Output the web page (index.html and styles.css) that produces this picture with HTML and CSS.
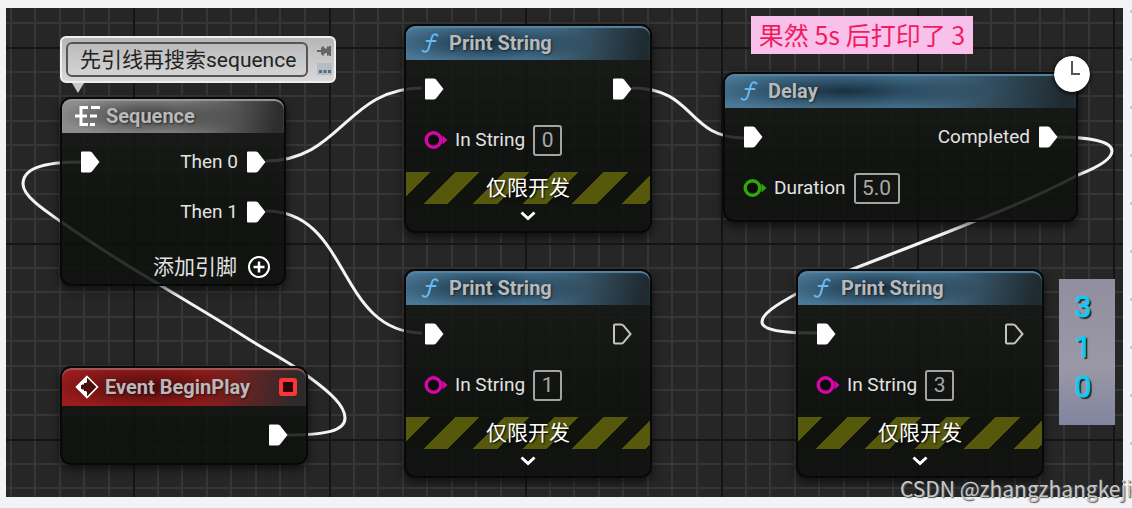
FILE: index.html
```html
<!DOCTYPE html>
<html lang="zh-CN">
<head>
<meta charset="utf-8">
<title>Blueprint – Sequence</title>
<link rel="stylesheet" href="styles.css">
</head>
<body>
<svg class="defs" aria-hidden="true">
  <symbol id="exec" viewBox="0 0 20 22"><path d="M2 0.500H9.500Q11 0.500 12 1.600L19.500 11L12 20.400Q11 21.500 9.500 21.500H2Q1 21.500 1 20.500V1.500Q1 0.500 2 0.500Z" fill="#fff"/></symbol>
  <symbol id="exec-open" viewBox="0 0 20 22"><path d="M3 1.500H9Q10.500 1.500 11.500 2.700L18.500 11L11.500 19.300Q10.500 20.500 9 20.500H3Q2 20.500 2 19.500V2.500Q2 1.500 3 1.500Z" fill="none" stroke="#c4c4c4" stroke-width="2"/></symbol>
  <symbol id="pin" viewBox="0 0 24 20"><circle cx="9.500" cy="10" r="7.300" fill="#0b0b0b" stroke="currentColor" stroke-width="3.400"/><path d="M18.500 5.500L23.500 10L18.500 14.500Z" fill="currentColor"/></symbol>
  <symbol id="fn" viewBox="0 0 18 22"><path d="M16.500 3.600C14.800 1.300 11.700 2 10.800 5.500L7.600 16.500C6.700 19.900 3.800 20.800 1.600 18.600M5.500 9H14.500" fill="none" stroke="#67b9ef" stroke-width="2" stroke-linecap="round"/></symbol>
  <symbol id="chevron" viewBox="0 0 16 10"><path d="M1.500 1.500L8 7.500L14.500 1.500" fill="none" stroke="#fff" stroke-width="3"/></symbol>
</svg>

<main class="graph">
  <svg class="layer" aria-hidden="true">
    <defs>
      <pattern id="grid" x="127" y="39" width="196" height="196" patternUnits="userSpaceOnUse">
        <path d="M25 0V196M49 0V196M74 0V196M98 0V196M123 0V196M147 0V196M172 0V196M0 25H196M0 49H196M0 74H196M0 98H196M0 123H196M0 147H196M0 172H196" stroke="#363636" stroke-width="2"/>
        <path d="M1 0V196M0 1H196" stroke="#151515" stroke-width="2"/>
      </pattern>
    </defs>
    <rect width="100%" height="100%" fill="url(#grid)"/>
    <g fill="none" stroke="#f4f4f4" stroke-width="3">
      <path d="M260 153C335 153 340 80 416 80"/>
      <path d="M260 203C345 203 330 324 416 325"/>
      <path d="M626 80C690 80 680 130 738 130"/>
      <path d="M76 154C35 154 17 161 17 176C17 188 38 202 54 213C84 234 120 257 154 277C185 296 215 313 244 332C272 349 288 357 303 369C325 385 339 398 339 410C339 423 320 427 280 427"/>
      <path d="M1050 129C1085 129 1106 134 1106 143C1106 152 1090 160 1072 167C1040 184 1003 200 969 213C930 229 888 245 847 261C825 270 805 278 790 286C770 297 756 306 756 314C756 322 775 325 811 325"/>
    </g>
  </svg>

  <aside class="bubble">
    <input class="bubble-text" aria-label="注释" value="先引线再搜索sequence">
    <span class="bubble-tools">
      <svg width="16" height="12" viewBox="0 0 16 12"><path d="M0 5H4V3L6 1L8 3.500H10V1L12 2V1H14V11H12V10L10 11V8H8L6 11L4 9V7H0Z" fill="#666"/></svg>
      <svg width="16" height="12" viewBox="0 0 16 12"><path d="M0 0H15V12H0Z" fill="#b4bdc6"/><path d="M2 7H5V10H2ZM6.500 7H9.500V10H6.500ZM11 7H14V10H11Z" fill="#596b7c"/></svg>
    </span>
  </aside>

  <section class="node sequence">
    <h2 class="title gray"><svg width="25" height="20" viewBox="0 0 25 20"><path d="M0 10H12M13 1.500H6V18.500H13M16 1.500H25M15 10H22M15 18.500H20" fill="none" stroke="#fff" stroke-width="3"/></svg>Sequence</h2>
    <div class="row"><svg class="exec"><use href="#exec"/></svg><span class="out">Then 0<svg class="exec"><use href="#exec"/></svg></span></div>
    <div class="row"><span class="out">Then 1<svg class="exec"><use href="#exec"/></svg></span></div>
    <button class="add">添加引脚<svg width="24" height="24" viewBox="0 0 24 24"><path d="M12 6.500V17.500M6.500 12H17.500" stroke="#fff" stroke-width="2.500"/><circle cx="12" cy="12" r="10" fill="none" stroke="#fff" stroke-width="2"/></svg></button>
  </section>

  <section class="node event">
    <h2 class="title red"><svg width="24" height="24" viewBox="0 0 24 24"><path d="M12 1.500L22.500 12L12 22.500L1.500 12Z" fill="#4c0d0d" stroke="#fff" stroke-width="1.600"/><path d="M12 1V8H9V10H6V14H9V16H12V23L1 12Z" fill="#fff"/><path d="M7 9.500H11V7L16 12L11 17V14.500H7Z" fill="#4c0d0d"/></svg>Event BeginPlay<span class="delegate"></span></h2>
    <div class="row"><span class="out"><svg class="exec"><use href="#exec"/></svg></span></div>
  </section>

  <section class="node print first">
    <h2 class="title blue"><svg class="fn"><use href="#fn"/></svg>Print String</h2>
    <div class="row"><svg class="exec"><use href="#exec"/></svg><svg class="exec out"><use href="#exec"/></svg></div>
    <label class="row field">
      <svg class="pin pink"><use href="#pin"/></svg>In String<input class="value" value="0"></label>
    <p class="dev">仅限开发</p>
    <button class="more" aria-label="展开"><svg class="chevron"><use href="#chevron"/></svg></button>
  </section>

  <section class="node print second">
    <h2 class="title blue"><svg class="fn"><use href="#fn"/></svg>Print String</h2>
    <div class="row"><svg class="exec"><use href="#exec"/></svg><svg class="exec out"><use href="#exec-open"/></svg></div>
    <label class="row field">
      <svg class="pin pink"><use href="#pin"/></svg>In String<input class="value" value="1"></label>
    <p class="dev">仅限开发</p>
    <button class="more" aria-label="展开"><svg class="chevron"><use href="#chevron"/></svg></button>
  </section>

  <section class="node delay">
    <h2 class="title blue"><svg class="fn"><use href="#fn"/></svg>Delay</h2>
    <div class="row"><svg class="exec"><use href="#exec"/></svg><span class="out">Completed<svg class="exec"><use href="#exec"/></svg></span></div>
    <label class="row field">
      <svg class="pin green"><use href="#pin"/></svg>Duration<input class="value wide" value="5.0"></label>
    <svg class="clock" viewBox="0 0 36 36"><circle cx="18" cy="18" r="18" fill="#fff"/><path d="M18 5V18H26" fill="none" stroke="#555" stroke-width="2"/></svg>
  </section>

  <section class="node print third">
    <h2 class="title blue"><svg class="fn"><use href="#fn"/></svg>Print String</h2>
    <div class="row"><svg class="exec"><use href="#exec"/></svg><svg class="exec out"><use href="#exec-open"/></svg></div>
    <label class="row field">
      <svg class="pin pink"><use href="#pin"/></svg>In String<input class="value" value="3"></label>
    <p class="dev">仅限开发</p>
    <button class="more" aria-label="展开"><svg class="chevron"><use href="#chevron"/></svg></button>
  </section>

  <p class="note">果然 5s 后打印了 3</p>
  <ol class="log"><li>3</li><li>1</li><li>0</li></ol>
</main>
<div class="ticks"></div>
<p class="watermark">CSDN @zhangzhangkeji</p>
</body>
</html>
```

FILE: styles.css
```css
* { box-sizing: border-box; }
body {
  margin: 0;
  min-height: 100vh;
  padding: 8px 9px 11px 6px;
  display: flex;
  position: relative;
  overflow: hidden;
  background: #f2f3f5;
  font-family: Roboto, "Noto Sans CJK SC", sans-serif;
  font-size: 19px;
  color: #e2e2e2;
}
p, h2, ol { margin: 0; padding: 0; }
svg { flex: none; }
button { border: 0; background: none; padding: 0; font: inherit; color: inherit; }
.defs { position: absolute; width: 0; height: 0; }
.graph { flex: 1; position: relative; overflow: hidden; background: #262626; }
.layer { position: absolute; inset: 0; width: 100%; height: 100%; }

.node {
  position: absolute;
  border: 2px solid #080808;
  border-radius: 11px;
  background: linear-gradient(rgba(24, 26, 23, .84), rgba(13, 16, 12, .86) 60%);
  box-shadow: 0 4px 10px rgba(0, 0, 0, .6);
}
.sequence { left: 54px; top: 89px; width: 226px; height: 189px; }
.event { left: 54px; top: 358px; width: 248px; height: 99px; }
.print { width: 248px; height: 209px; }
.first { left: 398px; top: 16px; }
.second { left: 398px; top: 261px; }
.third { left: 790px; top: 261px; }
.delay { left: 717px; top: 64px; width: 355px; height: 150px; }

.title {
  display: flex;
  align-items: center;
  height: 34px;
  margin-bottom: 4px;
  border-radius: 9px 9px 0 0;
  font-size: 20px;
  font-weight: 700;
  line-height: 24px;
  color: #b9b9b9;
  text-shadow: 1px 1px 2px rgba(0, 0, 0, .5);
}
.blue {
  gap: 10px;
  padding-left: 15px;
  background:
    radial-gradient(ellipse 42% 60% at 34% 50%, rgba(16, 36, 50, .85), rgba(16, 36, 50, 0)),
    linear-gradient(100deg, #4a7897 50%, #1f2b31 96%);
  box-shadow: inset 0 2px 1px #5585a3;
}
.gray {
  gap: 6px;
  padding-left: 13px;
  background:
    radial-gradient(ellipse 42% 60% at 40% 50%, rgba(40, 40, 40, .8), rgba(40, 40, 40, 0)),
    linear-gradient(100deg, #8c8c8c 50%, #2e2e2e 96%);
  box-shadow: inset 0 2px 1px #9a9a9a;
}
.red {
  gap: 6px;
  padding: 0 9px 0 13px;
  height: 38px;
  background:
    radial-gradient(ellipse 42% 60% at 36% 50%, rgba(60, 10, 10, .85), rgba(60, 10, 10, 0)),
    linear-gradient(100deg, #9c1c1c 55%, #2c2a2a 95%);
  box-shadow: inset 0 2px 1px #a05858;
}
.delegate {
  width: 18px;
  height: 18px;
  margin-left: auto;
  border: 4px solid #fb3636;
  border-radius: 3px;
  background: #2a0505;
}
.fn { width: 18px; height: 22px; }
.row {
  display: flex;
  align-items: center;
  height: 50px;
  padding: 0 18px;
  line-height: 24px;
}
.field { height: 52px; }
.exec { width: 20px; height: 22px; }
.out { display: flex; align-items: center; gap: 8px; margin-left: auto; }
.pin { width: 24px; height: 20px; margin-right: 7px; }
.pink { color: #d806a8; }
.green { color: #2fa808; }
.value {
  width: 29px;
  height: 31px;
  margin-left: 8px;
  padding: 0;
  border: 2px solid #a4a4a4;
  border-radius: 3px;
  background: transparent;
  font: inherit;
  font-size: 21px;
  text-align: center;
  color: #a8a8a8;
}
.wide { width: 46px; }
.add {
  display: flex;
  align-items: center;
  gap: 10px;
  margin: 18px 13px 0 auto;
  font-size: 21px;
  line-height: 24px;
}
.dev {
  margin-top: 6px;
  height: 32px;
  font-size: 21px;
  line-height: 32px;
  text-align: center;
  color: #fff;
  text-shadow: 1px 1px 2px #000;
  background: repeating-linear-gradient(135deg, #56590c 0 17px, #10120d 17px 35px);
}
.more { display: block; width: 100%; height: 24px; line-height: 0; }
.chevron { width: 16px; height: 10px; }
.clock {
  position: absolute;
  right: -14px;
  top: -18px;
  width: 36px;
  height: 36px;
  border-radius: 50%;
  box-shadow: 0 1px 4px #000;
}

.bubble {
  position: absolute;
  left: 54px;
  top: 28px;
  width: 276px;
  height: 47px;
  display: flex;
  align-items: center;
  gap: 9px;
  padding: 0 4px;
  border: 2px solid #efefef;
  border-radius: 6px;
  background: linear-gradient(#b6b6b6, #d9d9d9);
}
.bubble::after {
  content: "";
  position: absolute;
  left: 10px;
  top: 45px;
  border: 6px solid transparent;
  border-top: 10px solid #c8c8c8;
  border-bottom: 0;
}
.bubble-text {
  width: 242px;
  height: 35px;
  padding: 0 0 3px 12px;
  border: 2px solid #555;
  border-radius: 6px;
  background: transparent;
  font: inherit;
  font-size: 21px;
  color: #222;
}
.bubble-tools { display: grid; gap: 6px; }

.note {
  position: absolute;
  left: 745px;
  top: 8px;
  width: 222px;
  height: 38px;
  font: 25px/36px "Noto Sans CJK SC", sans-serif;
  text-align: center;
  white-space: nowrap;
  color: #f31b5e;
  background: #f8c1ec;
}
.log {
  position: absolute;
  left: 1053px;
  top: 271px;
  width: 56px;
  height: 146px;
  padding: 8px 8px 0 0;
  list-style: none;
  text-align: center;
  font-size: 30px;
  line-height: 40px;
  color: #12c8f2;
  -webkit-text-stroke: 1px #12c8f2;
  text-shadow: 2px 2px 1px #222;
  background: linear-gradient(#918f9f, #9a98a6 60%, #8185a0);
}
.ticks {
  position: absolute;
  right: 0;
  top: 10px;
  bottom: 0;
  width: 2px;
  background: repeating-linear-gradient(#c9cacc 0 3px, transparent 3px 48px);
}
.watermark {
  position: absolute;
  left: 900px;
  bottom: 6px;
  font-family: "Noto Sans CJK SC", sans-serif;
  font-size: 21px;
  line-height: 28px;
  white-space: nowrap;
  color: #c8c8c8;
  text-shadow: 1px 1px 1px #555;
}
```
